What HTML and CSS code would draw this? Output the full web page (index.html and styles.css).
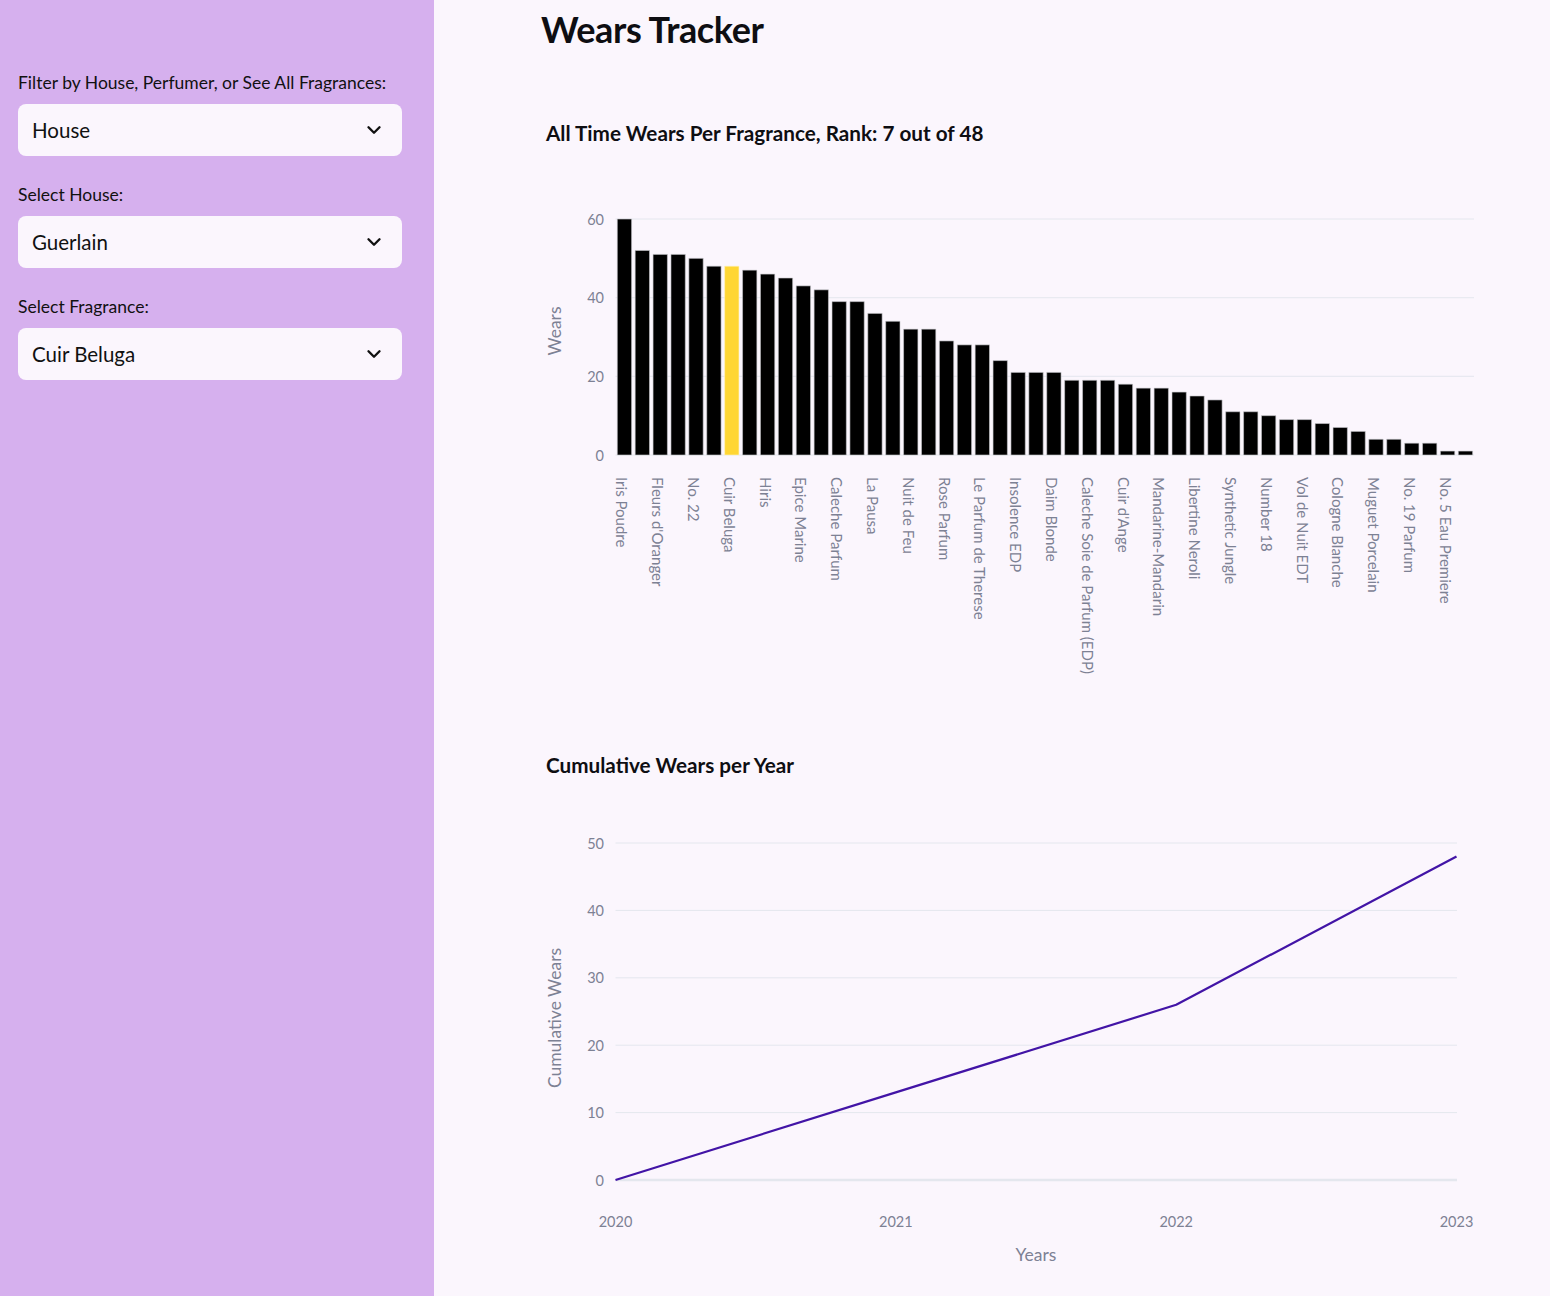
FILE: index.html
```html
<!DOCTYPE html>
<html lang="en">
<head>
<meta charset="utf-8">
<title>Wears Tracker</title>
<link rel="stylesheet" href="styles.css">
</head>
<body>
<div class="app">
  <aside class="sidebar">
    <div class="field">
      <label class="field-label">Filter by House, Perfumer, or See All Fragrances:</label>
      <div class="select"><span>House</span><svg class="chev" viewBox="0 0 24 24"><path d="M6 9l6 6 6-6"/></svg></div>
    </div>
    <div class="field">
      <label class="field-label">Select House:</label>
      <div class="select"><span>Guerlain</span><svg class="chev" viewBox="0 0 24 24"><path d="M6 9l6 6 6-6"/></svg></div>
    </div>
    <div class="field">
      <label class="field-label">Select Fragrance:</label>
      <div class="select"><span>Cuir Beluga</span><svg class="chev" viewBox="0 0 24 24"><path d="M6 9l6 6 6-6"/></svg></div>
    </div>
  </aside>

  <main class="main">
    <h1 class="page-title">Wears Tracker</h1>

    <h2 class="chart-title">All Time Wears Per Fragrance, Rank: 7 out of 48</h2>
    <svg class="chart chart-bars" width="960" height="608" viewBox="530 145 960 608">
      <g class="grid">
        <line x1="615.5" x2="1474" y1="219" y2="219"/>
        <line x1="615.5" x2="1474" y1="297.7" y2="297.7"/>
        <line x1="615.5" x2="1474" y1="376.3" y2="376.3"/>
        <line x1="615.5" x2="1474" y1="455" y2="455"/>
      </g>
      <g class="ytick">
        <text x="604" y="219">60</text>
        <text x="604" y="297.7">40</text>
        <text x="604" y="376.3">20</text>
        <text x="604" y="455">0</text>
      </g>
      <text class="axis-title" transform="translate(554 331) rotate(-90)">Wears</text>
      <g class="bars" transform="translate(615.5 455) scale(17.894 -3.933)">
        <rect x="0.1" width="0.8" height="60"/>
        <rect x="1.1" width="0.8" height="52"/>
        <rect x="2.1" width="0.8" height="51"/>
        <rect x="3.1" width="0.8" height="51"/>
        <rect x="4.1" width="0.8" height="50"/>
        <rect x="5.1" width="0.8" height="48"/>
        <rect class="hl" x="6.1" width="0.8" height="48"/>
        <rect x="7.1" width="0.8" height="47"/>
        <rect x="8.1" width="0.8" height="46"/>
        <rect x="9.1" width="0.8" height="45"/>
        <rect x="10.1" width="0.8" height="43"/>
        <rect x="11.1" width="0.8" height="42"/>
        <rect x="12.1" width="0.8" height="39"/>
        <rect x="13.1" width="0.8" height="39"/>
        <rect x="14.1" width="0.8" height="36"/>
        <rect x="15.1" width="0.8" height="34"/>
        <rect x="16.1" width="0.8" height="32"/>
        <rect x="17.1" width="0.8" height="32"/>
        <rect x="18.1" width="0.8" height="29"/>
        <rect x="19.1" width="0.8" height="28"/>
        <rect x="20.1" width="0.8" height="28"/>
        <rect x="21.1" width="0.8" height="24"/>
        <rect x="22.1" width="0.8" height="21"/>
        <rect x="23.1" width="0.8" height="21"/>
        <rect x="24.1" width="0.8" height="21"/>
        <rect x="25.1" width="0.8" height="19"/>
        <rect x="26.1" width="0.8" height="19"/>
        <rect x="27.1" width="0.8" height="19"/>
        <rect x="28.1" width="0.8" height="18"/>
        <rect x="29.1" width="0.8" height="17"/>
        <rect x="30.1" width="0.8" height="17"/>
        <rect x="31.1" width="0.8" height="16"/>
        <rect x="32.1" width="0.8" height="15"/>
        <rect x="33.1" width="0.8" height="14"/>
        <rect x="34.1" width="0.8" height="11"/>
        <rect x="35.1" width="0.8" height="11"/>
        <rect x="36.1" width="0.8" height="10"/>
        <rect x="37.1" width="0.8" height="9"/>
        <rect x="38.1" width="0.8" height="9"/>
        <rect x="39.1" width="0.8" height="8"/>
        <rect x="40.1" width="0.8" height="7"/>
        <rect x="41.1" width="0.8" height="6"/>
        <rect x="42.1" width="0.8" height="4"/>
        <rect x="43.1" width="0.8" height="4"/>
        <rect x="44.1" width="0.8" height="3"/>
        <rect x="45.1" width="0.8" height="3"/>
        <rect x="46.1" width="0.8" height="1"/>
        <rect x="47.1" width="0.8" height="1"/>
      </g>
      <g class="xtick-rot" transform="translate(-2 0)">
        <text transform="translate(624.4 477) rotate(90)">Iris Poudre</text>
        <text transform="translate(660.2 477) rotate(90)">Fleurs d'Oranger</text>
        <text transform="translate(696.0 477) rotate(90)">No. 22</text>
        <text transform="translate(731.8 477) rotate(90)">Cuir Beluga</text>
        <text transform="translate(767.6 477) rotate(90)">Hiris</text>
        <text transform="translate(803.4 477) rotate(90)">Epice Marine</text>
        <text transform="translate(839.2 477) rotate(90)">Caleche Parfum</text>
        <text transform="translate(875.0 477) rotate(90)">La Pausa</text>
        <text transform="translate(910.8 477) rotate(90)">Nuit de Feu</text>
        <text transform="translate(946.6 477) rotate(90)">Rose Parfum</text>
        <text transform="translate(982.3 477) rotate(90)">Le Parfum de Therese</text>
        <text transform="translate(1018.1 477) rotate(90)">Insolence EDP</text>
        <text transform="translate(1053.9 477) rotate(90)">Daim Blonde</text>
        <text transform="translate(1089.7 477) rotate(90)">Caleche Soie de Parfum (EDP)</text>
        <text transform="translate(1125.5 477) rotate(90)">Cuir d'Ange</text>
        <text transform="translate(1161.3 477) rotate(90)">Mandarine-Mandarin</text>
        <text transform="translate(1197.1 477) rotate(90)">Libertine Neroli</text>
        <text transform="translate(1232.9 477) rotate(90)">Synthetic Jungle</text>
        <text transform="translate(1268.7 477) rotate(90)">Number 18</text>
        <text transform="translate(1304.5 477) rotate(90)">Vol de Nuit EDT</text>
        <text transform="translate(1340.3 477) rotate(90)">Cologne Blanche</text>
        <text transform="translate(1376.1 477) rotate(90)">Muguet Porcelain</text>
        <text transform="translate(1411.9 477) rotate(90)">No. 19 Parfum</text>
        <text transform="translate(1447.7 477) rotate(90)">No. 5 Eau Premiere</text>
      </g>
    </svg>

    <h2 class="chart-title">Cumulative Wears per Year</h2>
    <svg class="chart chart-line" width="960" height="519" viewBox="530 777 960 519">
      <g class="grid">
        <line x1="615.5" x2="1457" y1="843" y2="843"/>
        <line x1="615.5" x2="1457" y1="910.4" y2="910.4"/>
        <line x1="615.5" x2="1457" y1="977.8" y2="977.8"/>
        <line x1="615.5" x2="1457" y1="1045.2" y2="1045.2"/>
        <line x1="615.5" x2="1457" y1="1112.6" y2="1112.6"/>
        <line class="zero" x1="615.5" x2="1457" y1="1180" y2="1180"/>
      </g>
      <g class="ytick">
        <text x="604" y="843">50</text>
        <text x="604" y="910.4">40</text>
        <text x="604" y="977.8">30</text>
        <text x="604" y="1045.2">20</text>
        <text x="604" y="1112.6">10</text>
        <text x="604" y="1180">0</text>
      </g>
      <g class="xtick">
        <text x="615.5" y="1221">2020</text>
        <text x="895.8" y="1221">2021</text>
        <text x="1176.2" y="1221">2022</text>
        <text x="1456.5" y="1221">2023</text>
      </g>
      <text class="axis-title" transform="translate(554 1018) rotate(-90)">Cumulative Wears</text>
      <text class="axis-title" x="1036" y="1254">Years</text>
      <polyline class="series" points="615.5,1180 895.8,1092.4 1176.2,1004.8 1456.5,856.5"/>
    </svg>
  </main>
</div>
</body>
</html>
```

FILE: styles.css
```css
* { box-sizing: border-box; }

html, body {
  margin: 0;
  padding: 0;
}

body {
  font-family: "Lato", "Liberation Sans", sans-serif;
  color: #111111;
  background: #fbf6fd;
}

.app {
  display: flex;
  width: 1550px;
  height: 1296px;
  overflow: hidden;
}

/* Sidebar */
.sidebar {
  flex: 0 0 434px;
  background: #d6b0ee;
  padding: 72px 32px 0 18px;
  display: flex;
  flex-direction: column;
  gap: 28px;
}

.field {
  display: flex;
  flex-direction: column;
}

.field-label {
  font-size: 17.5px;
  line-height: 22px;
  height: 22px;
  margin-bottom: 10px;
  color: #111111;
  white-space: nowrap;
}

.select {
  height: 52px;
  border-radius: 8px;
  background: #fbf6fd;
  display: flex;
  align-items: center;
  justify-content: space-between;
  padding: 0 17px 0 14px;
  font-size: 20.5px;
  color: #111111;
}

.chev {
  width: 22px;
  height: 22px;
  fill: none;
  stroke: #111111;
  stroke-width: 2.6;
  stroke-linecap: round;
  stroke-linejoin: round;
}

/* Main */
.main {
  flex: 1 1 auto;
  padding: 8px 0 0 96px;
  display: flex;
  flex-direction: column;
  align-items: flex-start;
}

.page-title {
  margin: 0 0 70px 11px;
  font-size: 36px;
  line-height: 43px;
  font-weight: 700;
  color: #0e0e12;
  letter-spacing: -0.4px;
}

.chart-title {
  margin: 0 0 0 16px;
  font-size: 20.7px;
  line-height: 24px;
  font-weight: 700;
  color: #0e0e12;
}

.chart {
  display: block;
  font-family: "Lato", "Liberation Sans", sans-serif;
}

.grid line {
  stroke: #e4e7ee;
  stroke-width: 1;
}

.grid line.zero {
  stroke-width: 2.4;
}

.ytick text {
  fill: #7d8194;
  font-size: 14.5px;
  text-anchor: end;
  dominant-baseline: central;
}

.xtick text {
  fill: #7d8194;
  font-size: 14.5px;
  text-anchor: middle;
  dominant-baseline: central;
}

.xtick-rot text {
  fill: #7d8194;
  font-size: 15px;
  text-anchor: start;
  dominant-baseline: central;
}

.axis-title {
  fill: #7d8194;
  font-size: 17.5px;
  text-anchor: middle;
  dominant-baseline: central;
}

.bars rect {
  fill: #000000;
  stroke: #c9c9cf;
  stroke-width: 0.6;
  vector-effect: non-scaling-stroke;
}

.bars rect.hl {
  fill: #ffd633;
  stroke: #fff3c0;
}

.series {
  fill: none;
  stroke: #4214a6;
  stroke-width: 2.2;
  stroke-linejoin: round;
}
```
